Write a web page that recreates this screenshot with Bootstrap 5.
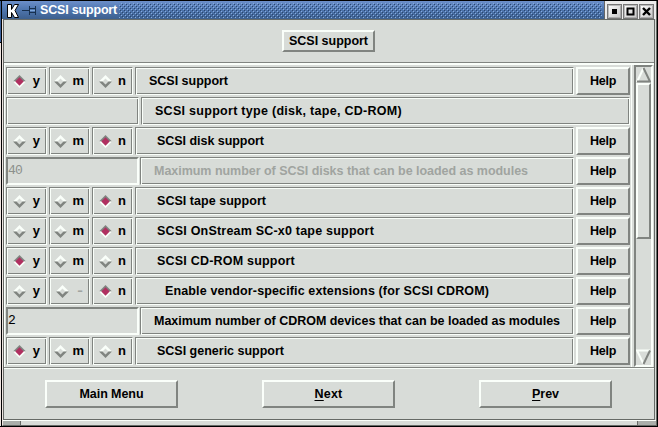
<!DOCTYPE html>
<html lang="en"><head><meta charset="utf-8"><title>SCSI support</title>
<link href="https://cdn.jsdelivr.net/npm/bootstrap@5.3.0/dist/css/bootstrap.min.css" rel="stylesheet">
<style>
:root{--face:#d8dcd8;--dark:#808480;--light:#fafffa;--edge:#666a66}
body{width:658px;height:427px;overflow:hidden;background:#000;font:bold 12.5px/14px "Liberation Sans",sans-serif;color:#000}
.desk-left{width:1px;background:linear-gradient(#000 1px,#3b619c 1px,#3b619c 42px,#000 42px,#000 43px,#efe5e1 43px)}
.win{width:655px;height:425px;margin:1px 0 0 1px;background:var(--face);border-right:1px solid var(--edge);border-bottom:1px solid var(--edge);border-left:1px solid #efe5e1}
.titlebar{height:18px;margin-left:-1px;background:linear-gradient(#6c8fca,#5077b0 45%,#3d608f)}
.ttl{font-size:12.5px;line-height:18px;color:#fff;width:79px;margin-left:3px;white-space:nowrap}
.wbtns{width:52px;height:18px;background:#ececec;padding:3px 2px 0 2px;gap:1px;border-left:1px solid #666}
.wbtn{width:15px;height:15px;border:1px solid #777;box-shadow:inset 1px 1px #bbb,inset -1px -1px #aaa;background:linear-gradient(135deg,#fff,#c4c4c4)}
.client{height:401px;width:652px;border:1px solid var(--edge)}
.head{height:43px;padding-top:10px;border-bottom:1px solid var(--dark)}
.raised{border:2px solid;border-color:var(--light) var(--dark) var(--dark) var(--light);background:var(--face);padding:0;font:inherit;color:#000;display:flex;align-items:center;justify-content:center;white-space:nowrap}
.head .raised{width:93px;height:22px;margin-left:278px}
.groove{height:28px;border:1px solid;border-color:var(--dark) var(--light) var(--light) var(--dark);box-shadow:inset 1px 1px var(--light),inset -1px -1px var(--dark);display:flex;align-items:center;white-space:nowrap}
.opt{width:41px;margin-right:2px;flex:none;justify-content:space-between;padding:0 6px;font-size:13px;line-height:13px}
.opt.o-m{padding:0 5px 0 4px}
.opt.off{padding:0 7px 0 6px}
.opt span{transform:translateY(-1px)}
.opt.off span{transform:translateY(-1px) scaleX(1.3)}
.main-area{height:304px;border-top:2px solid var(--light);border-left:1px solid var(--light)}
.rows{width:627px;padding:2px 0 0 1px;gap:2px;border-right:1px solid var(--light)}
.help{width:54px;height:28px;margin-left:2px;flex:none}
.field{width:133px;height:28px;flex:none;border:2px solid;border-color:var(--dark) var(--light) var(--light) var(--dark);font:13px/23px "Liberation Mono",monospace;letter-spacing:-.8px;margin-right:1px}
.dim,.off{color:#a0a4a0}
.field.dim{color:#8c908c}
.blank{width:133px;flex:none;margin-right:2px}
.sb{width:19px;margin:0 0 0 2px;border:2px solid;border-color:var(--dark) var(--light) var(--light) var(--dark)}
.thumb{height:156px}
.foot{height:52px;border-top:1px solid var(--dark);box-shadow:inset 0 1px var(--light);padding:12px 0 0 41px;gap:84px}
.foot .raised{width:133px;height:28px}
.grip{height:5px;border-top:1px solid var(--light)}
.grip i{width:18px;background:#aaaeaa;border-right:1px solid var(--edge)}
.grip i:last-child{width:19px;border-right:0;border-left:1px solid var(--edge)}
svg{display:block;flex:none}
u{text-underline-offset:2px;text-decoration-thickness:1px}
</style></head><body>
<svg width="0" height="0" class="position-absolute"><defs>
<g id="d0"><path d="M0 6.500 6.500 0 13 6.500H9.500L6.500 3.500 3.500 6.500z" fill="#fafffa"/><path d="M0 6.500H3.500L6.500 9.500 9.500 6.500h3.500L6.500 13z" fill="#808480"/></g>
<g id="d1"><path d="M0 6.500 6.500 0 13 6.500z" fill="#808480"/><path d="M0 6.500H13L6.500 13z" fill="#fafffa"/><path d="M2.300 6.500 6.500 2.300 10.700 6.500 6.500 10.700z" fill="#b03060"/></g>
<pattern id="dots" width="4" height="4" patternUnits="userSpaceOnUse"><path d="M0 0h1v1H0zM2 2h1v1H2z" fill="#86acdf"/><path d="M1 1h1v1H1zM3 3h1v1H3z" fill="#29466f"/></pattern>
</defs></svg>
<div class="d-flex"><div class="desk-left"></div>
<div class="win">
<div class="titlebar d-flex">
<svg width="35" height="18"><path d="M5.500 3.500h4v5l3-5h4l-3.500 6 3.500 7h-4l-3-5v5h-4z" fill="#fff" stroke="#000"/><path d="M20 9.500h7M27.500 5v9M33.500 5v9M28 7.500h5M28 11.500h5" stroke="#17304f" fill="none"/><path d="M28 9.500h5" stroke="#7fa8dc"/></svg>
<div class="ttl"><span data-w="77">SCSI support</span></div>
<svg width="483" height="18" class="me-auto" shape-rendering="crispEdges"><rect y="2" width="483" height="15" fill="url(#dots)"/></svg>
<div class="wbtns d-flex">
<div class="wbtn"><svg width="13" height="13"><path d="M4 4h5v5H4z"/></svg></div>
<div class="wbtn"><svg width="13" height="13"><path d="M3.500 3.500h6v6h-6z" fill="none" stroke="#000" stroke-width="2"/></svg></div>
<div class="wbtn"><svg width="13" height="13"><path d="M3 3l7 7M10 3l-7 7" stroke="#000" stroke-width="2.400"/></svg></div>
</div></div>
<div class="client">
<div class="head"><div class="raised"><span data-w="79">SCSI support</span></div></div>
<div class="main-area d-flex">
<div class="rows d-flex flex-column" id="rows"></div>
<div class="sb d-flex flex-column">
<svg width="15" height="16"><path d="M1 15 7.500 1" stroke="#fafffa" stroke-width="2"/><path d="M7.500 1 14 14.500H1" stroke="#808480" stroke-width="2" fill="none"/></svg>
<div class="raised thumb"></div>
<svg class="mt-auto" width="15" height="16"><path d="M14 1.500H1L7.500 15" stroke="#fafffa" stroke-width="2" fill="none"/><path d="M14 1.500 7.500 15" stroke="#808480" stroke-width="2"/></svg>
</div></div>
<div class="foot d-flex"><button class="raised"><span data-w="64">Main Menu</span></button><button class="raised"><span data-w="28"><u>N</u>ext</span></button><button class="raised"><span data-w="27"><u>P</u>rev</span></button></div>
</div>
<div class="grip d-flex justify-content-between"><i></i><i></i></div>
</div></div>
<script>
// Each row: choice, label, left padding, label width, entry value
const rows=[['y','SCSI support',13,79],['type','SCSI support type (disk, tape, CD-ROM)',13,247],['n','SCSI disk support',21,107],
['field','Maximum number of SCSI disks that can be loaded as modules',13,374,'40'],['n','SCSI tape support',21,109],['n','SCSI OnStream SC-x0 tape support',21,217],
['y','SCSI CD-ROM support',21,138],['n-','Enable vendor-specific extensions (for SCSI CDROM)',29,324],['field','Maximum number of CDROM devices that can be loaded as modules',13,406,'2'],['y','SCSI generic support',21,127]];
document.getElementById('rows').innerHTML=rows.map(([k,t,p,w,v])=>{
 let left;
 if(k==='type')left='<div class="groove blank"></div>';
 else if(k==='field')left=`<div class="field ${v==='40'?'dim':''}">${v}</div>`;
 else left=['y','m','n'].map(c=>{const off=c==='m'&&k==='n-';return `<div class="groove opt o-${c} ${off?'off':''}"><svg width="13" height="13"><use href="#${k[0]===c?'d1':'d0'}"/></svg><span>${off?'-':c}</span></div>`}).join('');
 return `<div class="d-flex">${left}<div class="groove flex-grow-1 ${v==='40'?'dim':''}" style="padding-left:${p}px"><span data-w="${w}">${t}</span></div>${k==='type'?'':'<button class="raised help"><span data-w="26">Help</span></button>'}<div style="width:1px"></div></div>`}).join('');
// Spread letters so every caption takes its nominal width
document.querySelectorAll('[data-w]').forEach(e=>{const w=e.getBoundingClientRect().width,s=(e.dataset.w-w)/e.textContent.length;e.style.letterSpacing=s+'px'});
</script>
<script src="https://cdn.jsdelivr.net/npm/bootstrap@5.3.0/dist/js/bootstrap.bundle.min.js"></script>
</body></html>
